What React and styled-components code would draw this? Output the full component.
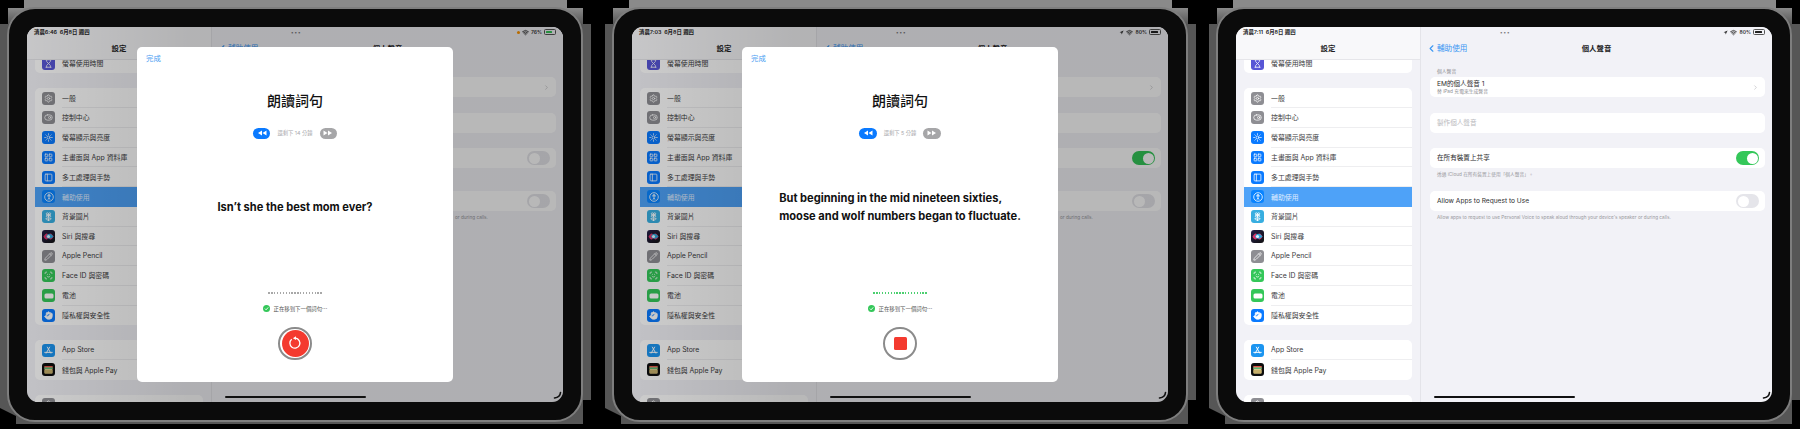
import React from "react";
import styled, { createGlobalStyle } from "styled-components";
import {
  Hourglass,
  Settings,
  ToggleRight,
  Sun,
  LayoutGrid,
  PanelLeft,
  Flower2,
  Pencil,
  ScanFace,
  Hand,
  Wifi,
  Navigation,
  ChevronLeft,
  ChevronRight,
} from "lucide-react";

const GlobalStyle = createGlobalStyle`
  html, body {
    margin: 0;
    height: 429px;
    overflow: hidden;
    background: #000;
    font-family: Inter, "Noto Sans CJK TC", sans-serif;
  }
  * { box-sizing: border-box; }
`;

const Page = styled.div`
  display: flex;
  gap: 29px;
  padding: 7px 0 0 7px;
  width: 1800px;
  height: 429px;
  background: #000;
`;

const Shell = styled.div`
  position: relative;
  flex: none;
  width: 576px;
  height: 415px;

  &:last-child {
    margin-left: -1px;
  }

  &::before {
    content: "";
    position: absolute;
    top: -7px;
    left: -7px;
    right: -8px;
    bottom: -2px;
    background: linear-gradient(180deg, #8a8a8a 0, #8a8a8a 8px, #565656 24px);
    clip-path: polygon(
      24px 0,
      calc(100% - 24px) 0,
      calc(100% - 24px) 8px,
      calc(100% - 8px) 8px,
      calc(100% - 8px) 24px,
      100% 24px,
      100% calc(100% - 24px),
      calc(100% - 8px) calc(100% - 24px),
      calc(100% - 8px) 100%,
      16px 100%,
      16px calc(100% - 8px),
      0 calc(100% - 16px),
      0 24px,
      8px 24px,
      8px 8px,
      24px 8px
    );
  }
`;

const Frame = styled.div`
  position: relative;
  height: 100%;
  padding: 18px;
  border: 2px solid #7e7e7e;
  border-radius: 28px;
  background: #0b0b0b;
`;

const Screen = styled.div`
  position: relative;
  display: flex;
  width: 536px;
  height: 375px;
  overflow: hidden;
  border-radius: 11px;
  background: #f2f2f7;
`;

const Sidebar = styled.div`
  display: flex;
  flex-direction: column;
  flex: none;
  width: 185px;
  border-right: 1px solid #e4e4e9;
`;

const NavHead = styled.div`
  position: relative;
  z-index: 1;
  flex: none;
  height: 33px;
  background: ${(p) => (p.$side ? "#f8f8fa" : "#f2f2f7")};
  border-bottom: ${(p) => (p.$side ? "1px solid #e6e6ea" : "none")};
`;

const StatusRow = styled.div`
  display: flex;
  align-items: center;
  justify-content: ${(p) => (p.$right ? "space-between" : "flex-start")};
  height: 10px;
  padding: 0 ${(p) => (p.$right ? "7px 0 79px" : "0 0 7px")};
  font-size: 5.4px;
  font-weight: 600;
  color: #222;
  white-space: pre;
`;

const NavTitle = styled.div`
  text-align: center;
  font-size: 7.4px;
  font-weight: 700;
  line-height: 10px;
  margin-top: 7px;
  color: #1c1c1e;
`;

const SideList = styled.div`
  display: flex;
  flex-direction: column;
  gap: 15px;
  padding: 0 8px;
  margin-top: -6.5px;
`;

const Group = styled.div`
  flex: none;
  border-radius: 5px;
  background: #fff;
  overflow: hidden;
`;

const SideRow = styled.div`
  display: flex;
  align-items: center;
  gap: 7px;
  height: 19.75px;
  padding-left: 7px;
  font-size: 6.9px;
  color: ${(p) => (p.$active ? "#dcebff" : "#3a3a3c")};
  background: ${(p) => (p.$active ? "#4ea2f8" : "transparent")};
`;

const RowLabel = styled.div`
  display: flex;
  align-items: center;
  flex: 1;
  height: 100%;
  border-bottom: ${(p) => (p.$last || p.$active ? "none" : "1px solid #eeeef0")};
`;

const IconTile = styled.div`
  display: flex;
  align-items: center;
  justify-content: center;
  flex: none;
  width: 13px;
  height: 13px;
  border-radius: 3px;
  color: #fff;
  background: ${(p) => p.$bg};
`;

const Detail = styled.div`
  display: flex;
  flex-direction: column;
  flex: 1;
  min-width: 0;
`;

const Dots = styled.div`
  font-size: 5px;
  letter-spacing: 1px;
  color: #777;
`;

const RightStatus = styled.div`
  display: flex;
  align-items: center;
  gap: 2px;
  color: #333;
  font-size: 5px;
`;

const OrangeDot = styled.span`
  width: 3px;
  height: 3px;
  border-radius: 50%;
  background: #ff9500;
`;

const Battery = styled.span`
  display: block;
  width: 12px;
  height: 5.5px;
  padding: 0.8px;
  border: 0.5px solid #555;
  border-radius: 1.5px;

  &::before {
    content: "";
    display: block;
    width: ${(p) => p.$level}%;
    height: 100%;
    border-radius: 0.5px;
    background: ${(p) => p.$color};
  }
`;

const BackLink = styled.div`
  position: absolute;
  left: 5px;
  bottom: 6px;
  display: flex;
  align-items: center;
  font-size: 7.6px;
  line-height: 10px;
  color: #3b97f3;
`;

const DetailBody = styled.div`
  display: flex;
  flex-direction: column;
  padding: 7px 7px 0 9px;
`;

const SectionLabel = styled.div`
  height: 10px;
  padding-left: 7px;
  font-size: 4.8px;
  line-height: 8px;
  color: #8e8e93;
`;

const DetailGroup = styled(Group)`
  display: flex;
  align-items: center;
  justify-content: space-between;
  height: 20px;
  padding: 0 6px 0 7px;
  margin-top: ${(p) => p.$mt || 0}px;
`;

const RowTitle = styled.div`
  font-size: 6.6px;
  line-height: 8px;
  color: ${(p) => (p.$muted ? "#b9b9bd" : "#2c2c2e")};
`;

const RowSub = styled.div`
  font-size: 4.8px;
  line-height: 6px;
  color: #8e8e93;
`;

const Footnote = styled.div`
  height: 12px;
  padding-left: ${(p) => p.$indent || 7}px;
  font-size: 4.7px;
  line-height: 12px;
  color: #98989d;
  white-space: nowrap;
`;

const Toggle = styled.div`
  display: flex;
  justify-content: ${(p) => (p.$on ? "flex-end" : "flex-start")};
  flex: none;
  width: 23px;
  height: 14px;
  padding: 1.5px;
  border-radius: 7px;
  background: ${(p) => (p.$on ? "#34c759" : "#e5e5ea")};

  &::before {
    content: "";
    width: 11px;
    height: 11px;
    border-radius: 50%;
    background: #fff;
  }
`;

const HomeBar = styled.div`
  position: absolute;
  z-index: 3;
  left: 50%;
  bottom: 4px;
  width: 141px;
  height: 2px;
  margin-left: -70px;
  border-radius: 1px;
  background: #111;
`;

const CornerArc = styled.svg`
  position: absolute;
  z-index: 3;
  right: 1px;
  bottom: 2px;
  width: 9px;
  height: 9px;
`;

const Scrim = styled.div`
  position: absolute;
  z-index: 2;
  inset: 0;
  display: flex;
  align-items: center;
  justify-content: center;
  background: linear-gradient(90deg, rgba(0, 0, 0, 0.2), rgba(0, 0, 0, 0.28) 30%);
`;

const Modal = styled.div`
  display: flex;
  flex-direction: column;
  align-items: center;
  width: 316px;
  height: 335px;
  padding: 7px 0 22px;
  border-radius: 5px;
  background: #fff;
`;

const Done = styled.div`
  align-self: flex-start;
  margin-left: 9px;
  font-size: 7.4px;
  line-height: 10px;
  color: #4a9ef2;
`;

const ModalTitle = styled.div`
  margin-top: 27px;
  font-size: 14px;
  font-weight: 500;
  line-height: 20px;
  color: #111;
`;

const Pager = styled.div`
  display: flex;
  align-items: center;
  gap: 7px;
  margin-top: 16.5px;
  font-size: 5.3px;
  color: #a9a9ad;
`;

const Pill = styled.div`
  display: flex;
  align-items: center;
  justify-content: center;
  width: 17.5px;
  height: 11px;
  border-radius: 5.5px;
  color: #fff;
  background: ${(p) => (p.$active ? "#0a7aff" : "#a6a6a8")};
`;

const Sentence = styled.div`
  display: flex;
  align-items: center;
  justify-content: center;
  flex: 1;
  padding-bottom: 16px;
  text-align: left;
  font-size: 11.1px;
  font-weight: 700;
  line-height: 18px;
  color: #111;
`;

const Meter = styled.div`
  display: flex;
  gap: 1.5px;
  height: 2px;
`;

const MeterTick = styled.span`
  width: 1.4px;
  background: ${(p) => (p.$green ? "#4cd070" : "#a8a8a8")};
`;

const Progress = styled.div`
  display: flex;
  align-items: center;
  gap: 4px;
  height: 8px;
  margin-top: 10.5px;
  font-size: 5.4px;
  color: #555;
`;

const RecordRing = styled.div`
  display: flex;
  align-items: center;
  justify-content: center;
  width: 33.5px;
  height: 33.5px;
  margin-top: 14px;
  border: 2px solid #8b8b8b;
  border-radius: 50%;
  background: #fff;
`;

const RecordFill = styled.div`
  display: flex;
  align-items: center;
  justify-content: center;
  width: 27px;
  height: 27px;
  border-radius: 50%;
  background: #f43a2f;
`;

const StopSquare = styled.div`
  width: 13px;
  height: 13px;
  border-radius: 1.5px;
  background: #f43a2f;
`;

const SiriIcon = ({ id }) => (
  <svg width="13" height="13" viewBox="0 0 13 13">
    <defs>
      <linearGradient id={id} x1="0" y1="0" x2="1" y2="1">
        <stop offset="0" stopColor="#26204a" />
        <stop offset="1" stopColor="#111" />
      </linearGradient>
    </defs>
    <rect width="13" height="13" rx="3" fill={`url(#${id})`} />
    <path d="M1.5 6.5C4 2.5 5 3 6.5 5c1.5-2 3-2.5 5 1.5-2 4-3.5 3.5-5 1.5-1.5 2-3 2.5-5-1.5z" fill="#d8336b" />
    <path d="M4 6.5c1.5-3 4-4 7.5 0-3 3-5.5 3-7.5 0z" fill="#2aa6d8" />
    <circle cx="6.5" cy="6.5" r="1.5" fill="#e6f3ff" />
  </svg>
);

const StoreIcon = () => (
  <svg width="9" height="9" viewBox="0 0 12 12" fill="none" stroke="#fff" strokeWidth="1.3" strokeLinecap="round">
    <path d="M7.5 1.5 3 9.5M4.5 1.5 9 9.5M1 8.5h10" />
  </svg>
);

const WalletIcon = () => (
  <svg width="13" height="13" viewBox="0 0 13 13">
    <rect width="13" height="13" rx="3" fill="#0d0d0d" />
    <rect x="2.5" y="3" width="8" height="7.5" rx="1" fill="#d9c98c" />
    <rect x="2.5" y="3" width="8" height="1.5" fill="#e2574c" />
    <rect x="2.5" y="4.5" width="8" height="1.5" fill="#5cb574" />
    <rect x="2.5" y="7" width="8" height="3.5" rx="0.5" fill="#c7b06a" />
  </svg>
);

const BatteryIcon = () => (
  <svg width="10" height="6" viewBox="0 0 10 6">
    <rect x="0.5" y="0.5" width="9" height="5" rx="1.5" fill="#fff" />
  </svg>
);

const AccessIcon = () => (
  <svg width="10" height="10" viewBox="0 0 10 10" fill="none" stroke="#fff" strokeWidth="0.8">
    <circle cx="5" cy="5" r="4.3" />
    <circle cx="5" cy="2.9" r="0.5" fill="#fff" />
    <path d="M3 3.9h4M5 3.9v2M5 5.9 4 7.6M5 5.9l1 1.7" />
  </svg>
);

const lucideTile = (Icon, bg, props = {}) => (
  <IconTile $bg={bg}>
    <Icon size={9} strokeWidth={2} {...props} />
  </IconTile>
);

const sideGroups = (uid) => [
  [{ label: "螢幕使用時間", icon: lucideTile(Hourglass, "#5856d6") }],
  [
    { label: "一般", icon: lucideTile(Settings, "#8e8e93") },
    { label: "控制中心", icon: lucideTile(ToggleRight, "#8e8e93") },
    { label: "螢幕顯示與亮度", icon: lucideTile(Sun, "#0a7aff") },
    { label: "主畫面與 App 資料庫", icon: lucideTile(LayoutGrid, "#0a7aff") },
    { label: "多工處理與手勢", icon: lucideTile(PanelLeft, "#0a7aff") },
    { label: "輔助使用", active: true, icon: <IconTile $bg="#0a84ff"><AccessIcon /></IconTile> },
    { label: "背景圖片", icon: lucideTile(Flower2, "#38aee0") },
    { label: "Siri 與搜尋", icon: <SiriIcon id={`siri-${uid}`} /> },
    { label: "Apple Pencil", icon: lucideTile(Pencil, "#8e8e93") },
    { label: "Face ID 與密碼", icon: lucideTile(ScanFace, "#34c759") },
    { label: "電池", icon: <IconTile $bg="#34c759"><BatteryIcon /></IconTile> },
    { label: "隱私權與安全性", icon: lucideTile(Hand, "#0a7aff", { fill: "#fff" }) },
  ],
  [
    { label: "App Store", icon: <IconTile $bg="#1c95f0"><StoreIcon /></IconTile> },
    { label: "錢包與 Apple Pay", icon: <WalletIcon /> },
  ],
  [{ label: "", icon: lucideTile(Settings, "#8e8e93") }],
];

const Rewind = ({ flip }) => (
  <svg width="10" height="6" viewBox="0 0 10 6" fill="currentColor" style={flip ? { transform: "scaleX(-1)" } : undefined}>
    <path d="M5 0.5v5L1 3zM9.5 0.5v5L5.5 3z" />
  </svg>
);

const CheckBadge = () => (
  <svg width="7" height="7" viewBox="0 0 7 7">
    <circle cx="3.5" cy="3.5" r="3.5" fill="#34c759" />
    <path d="M1.9 3.6 3.1 4.8 5.2 2.4" fill="none" stroke="#fff" strokeWidth="0.9" />
  </svg>
);

const RetryIcon = () => (
  <svg width="14" height="14" viewBox="0 0 14 14" fill="none" stroke="#fff" strokeWidth="1.3">
    <path d="M7.5 2.2a5 5 0 1 1-3.8 1.1" />
    <path d="M8 0.3 4.9 2.2 8 4.1z" fill="#fff" stroke="none" />
  </svg>
);

const meterTicks = Array.from({ length: 19 }, (_, i) => i);

const RecordingModal = ({ remaining, lines, greenMeter, stopped }) => (
  <Scrim>
    <Modal>
      <Done>完成</Done>
      <ModalTitle>朗讀詞句</ModalTitle>
      <Pager>
        <Pill $active><Rewind /></Pill>
        <span>{remaining}</span>
        <Pill><Rewind flip /></Pill>
      </Pager>
      <Sentence>
        <div>
          {lines.map((line) => (
            <div key={line}>{line}</div>
          ))}
        </div>
      </Sentence>
      <Meter>
        {meterTicks.map((i) => (
          <MeterTick key={i} $green={greenMeter} />
        ))}
      </Meter>
      <Progress>
        <CheckBadge />
        <span>正在移到下一個詞句⋯</span>
      </Progress>
      <RecordRing>
        {stopped ? <StopSquare /> : <RecordFill><RetryIcon /></RecordFill>}
      </RecordRing>
    </Modal>
  </Scrim>
);

const Tablet = ({ time, level, charging, orange, shareOn, modal }) => (
  <Shell>
    <Frame>
      <Screen>
        <Sidebar>
          <NavHead $side>
            <StatusRow>{`${time}  6月8日 週四`}</StatusRow>
            <NavTitle>設定</NavTitle>
          </NavHead>
          <SideList>
            {sideGroups(time).map((rows, g) => (
              <Group key={g}>
                {rows.map((row, i) => (
                  <SideRow key={row.label || g} $active={row.active}>
                    {row.icon}
                    <RowLabel $active={row.active} $last={i === rows.length - 1}>
                      {row.label}
                    </RowLabel>
                  </SideRow>
                ))}
              </Group>
            ))}
          </SideList>
        </Sidebar>
        <Detail>
          <NavHead>
            <StatusRow $right>
              <Dots>•••</Dots>
              <RightStatus>
                {orange ? <OrangeDot /> : <Navigation size={5} fill="#333" strokeWidth={0} />}
                <Wifi size={7} strokeWidth={3} />
                <span>{level}%</span>
                <Battery $level={level} $color={charging ? "#34c759" : "#222"} />
              </RightStatus>
            </StatusRow>
            <NavTitle>個人聲音</NavTitle>
            <BackLink>
              <ChevronLeft size={11} strokeWidth={2.5} />
              <span>輔助使用</span>
            </BackLink>
          </NavHead>
          {/* rows under the sheet can't be read, only their ends show */}
          <DetailBody>
            <SectionLabel>{!modal && "個人聲音"}</SectionLabel>
            <DetailGroup>
              {modal ? <span /> : (
                <div>
                  <RowTitle>EM的個人聲音 1</RowTitle>
                  <RowSub>替 iPad 充電來生成聲音</RowSub>
                </div>
              )}
              <ChevronRight size={7} color="#b5b5ba" strokeWidth={2} />
            </DetailGroup>
            <DetailGroup $mt={16}>
              {!modal && <RowTitle $muted>製作個人聲音</RowTitle>}
            </DetailGroup>
            <DetailGroup $mt={15}>
              {modal ? <span /> : <RowTitle>在所有裝置上共享</RowTitle>}
              <Toggle $on={shareOn} />
            </DetailGroup>
            <Footnote>{!modal && "透過 iCloud 在所有裝置上使用「個人聲音」。"}</Footnote>
            <DetailGroup $mt={11}>
              {modal ? <span /> : <RowTitle>Allow Apps to Request to Use</RowTitle>}
              <Toggle />
            </DetailGroup>
            {modal ? (
              <Footnote $indent={234}>or during calls.</Footnote>
            ) : (
              <Footnote>
                Allow apps to request to use Personal Voice to speak aloud through your device's speaker or during calls.
              </Footnote>
            )}
          </DetailBody>
        </Detail>
        {modal && <RecordingModal {...modal} />}
        <HomeBar />
        <CornerArc viewBox="0 0 9 9" fill="none" stroke="#111" strokeWidth="1.6" strokeLinecap="round">
          <path d="M7.5 1.5C7.3 4.5 5 6.5 1.5 7" />
        </CornerArc>
      </Screen>
    </Frame>
  </Shell>
);

export default function App() {
  return (
    <>
      <GlobalStyle />
      <Page>
        <Tablet
          time="清晨6:46"
          level={76}
          charging
          orange
          shareOn={false}
          modal={{
            remaining: "還剩下 14 分鐘",
            lines: ["Isn’t she the best mom ever?"],
          }}
        />
        <Tablet
          time="清晨7:03"
          level={80}
          shareOn
          modal={{
            remaining: "還剩下 5 分鐘",
            lines: ["But beginning in the mid nineteen sixties,", "moose and wolf numbers began to fluctuate."],
            greenMeter: true,
            stopped: true,
          }}
        />
        <Tablet time="清晨7:11" level={80} shareOn />
      </Page>
    </>
  );
}
